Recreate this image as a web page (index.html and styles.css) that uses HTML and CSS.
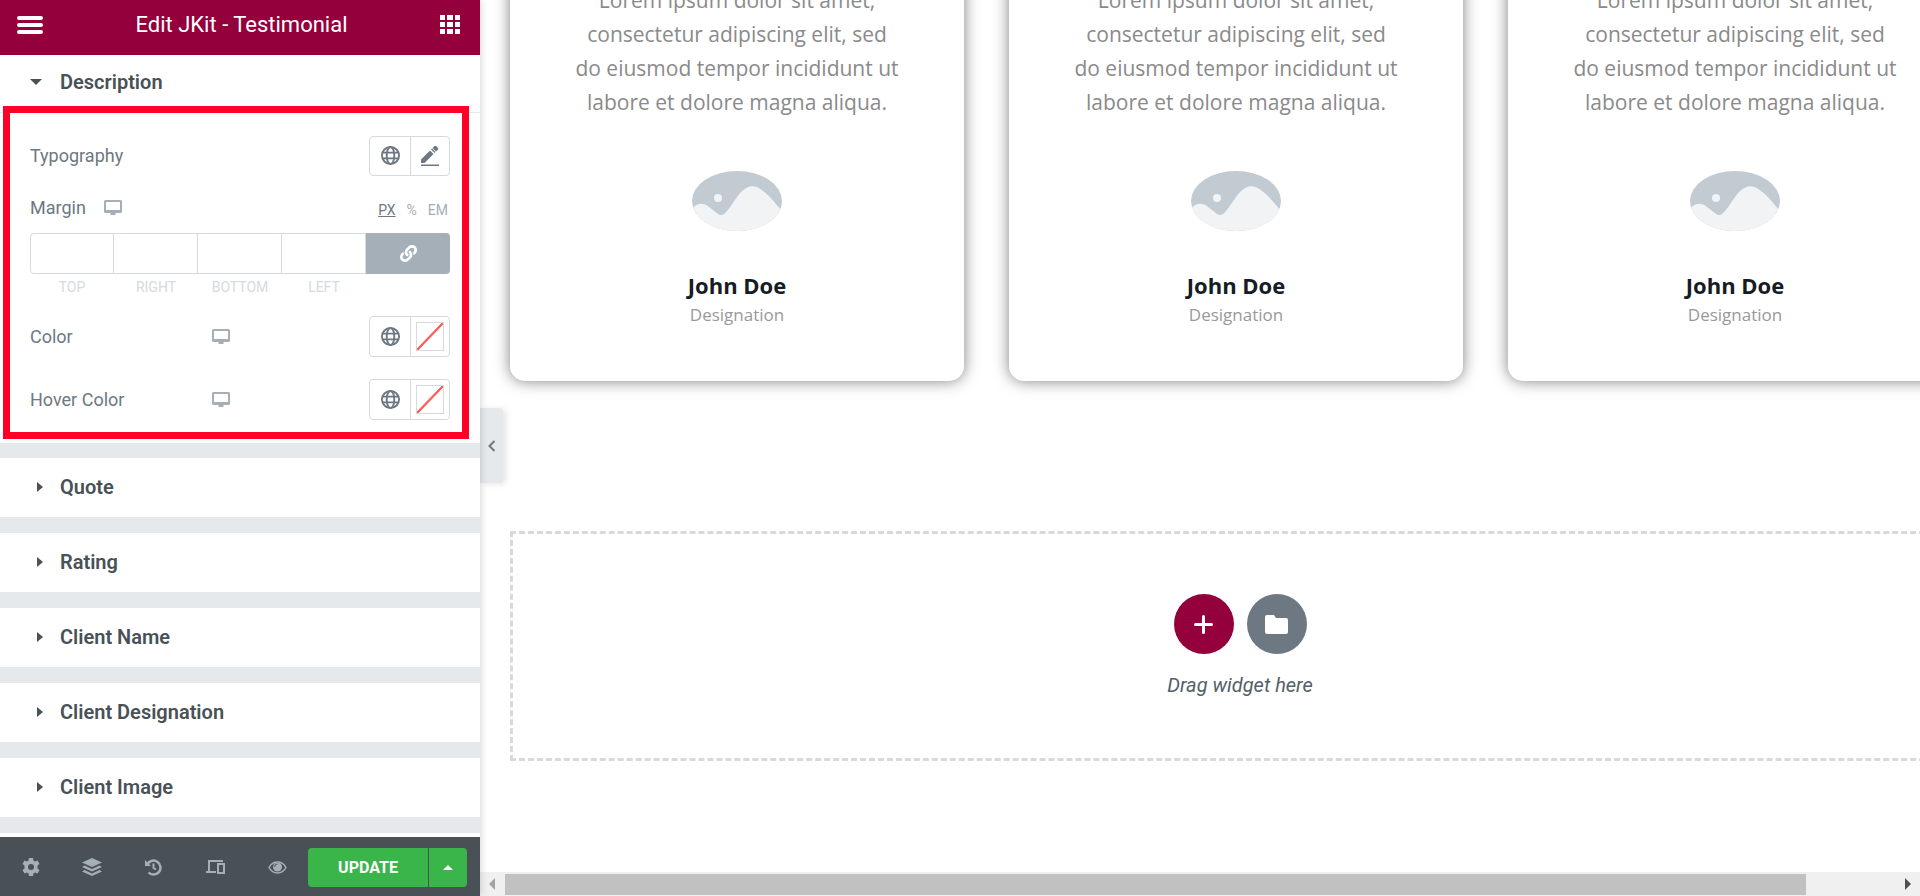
FILE: index.html
```
<!DOCTYPE html>
<html lang="en">
<head>
    <meta charset="UTF-8">
    <title>Edit JKit - Testimonial</title>
    <link rel="stylesheet" href="styles.css">
</head>
<body>
    <!-- shared icons -->
    <svg class="sprite" aria-hidden="true">
        <symbol id="i-globe" viewBox="0 0 20 20">
            <g fill="none" stroke="currentColor" stroke-width="2">
                <circle cx="10" cy="10" r="9"/>
                <ellipse cx="10" cy="10" rx="4" ry="9"/>
                <path d="M1.5 7h17M1.5 13h17"/>
            </g>
        </symbol>
        <symbol id="i-desktop" viewBox="0 0 18 15">
            <path fill="currentColor" fill-rule="evenodd" d="M1.500 0h15a1.500 1.500 0 0 1 1.500 1.500v10a1.500 1.500 0 0 1-1.500 1.500h-5v2h-5v-2h-5A1.500 1.500 0 0 1 0 11.500v-10A1.500 1.500 0 0 1 1.500 0zM2 2v8h14V2z"/>
        </symbol>
        <symbol id="i-placeholder" viewBox="0 0 90 60">
            <path fill="#c2cad2" d="M0 0h90v60H0z"/>
            <path fill="#f1f3f5" d="M0 38C5 31 12 32 17 36c6 4 9 8 12 8 6 0 12-14 20-23 8-8 15-7 22-1 7 5 13 13 19 20v20H0z"/>
            <circle cx="26" cy="27" r="4" fill="#f1f3f5"/>
        </symbol>
    </svg>

    <div class="editor">
        <aside class="panel">
            <header class="panel-header">
                <button class="icon-btn" aria-label="Menu">
                    <svg width="26" height="18" viewBox="0 0 26 18"><path stroke="currentColor" stroke-width="4" stroke-linecap="round" d="M2 2h22M2 9h22M2 16h22"/></svg>
                </button>
                <h1>Edit JKit - Testimonial</h1>
                <button class="icon-btn" aria-label="Widgets">
                    <svg width="20" height="19" viewBox="0 0 20 19"><path fill="currentColor" d="M0 0h5v5H0zM7 0h6v5H7zM15 0h5v5h-5zM0 7h5v5H0zM7 7h6v5H7zM15 7h5v5h-5zM0 14h5v5H0zM7 14h6v5H7zM15 14h5v5h-5z"/></svg>
                </button>
            </header>

            <div class="sections">
                <section class="section open">
                    <button class="section-title"><span class="caret down"></span>Description</button>
                    <div class="controls">
                        <div class="control">
                            <span class="label">Typography</span>
                            <div class="btn-group">
                                <button aria-label="Global typography"><svg width="19" height="19"><use href="#i-globe"/></svg></button>
                                <button aria-label="Edit typography">
                                    <svg width="18" height="20" viewBox="0 0 18 20"><path fill="currentColor" d="M0 13.500v3.500h3.500L12.500 8 9 4.500zM10 3.500L13.500 7l1-1L11 2.500zM11.500 2l3.500 3.500 2-2c.5-.5.5-1 0-1.500L15 0c-.5-.5-1-.5-1.500 0zM0 18.500h18v1.500H0z"/></svg>
                                </button>
                            </div>
                        </div>
                        <div class="control margin-row">
                            <span class="label">Margin</span>
                            <svg class="device" width="18" height="15"><use href="#i-desktop"/></svg>
                            <div class="units"><a href="#" class="active">PX</a><a href="#">%</a><a href="#">EM</a></div>
                        </div>
                        <div class="dimensions">
                            <div class="dim"><input type="text" id="m-top"><label for="m-top">TOP</label></div>
                            <div class="dim"><input type="text" id="m-right"><label for="m-right">RIGHT</label></div>
                            <div class="dim"><input type="text" id="m-bottom"><label for="m-bottom">BOTTOM</label></div>
                            <div class="dim"><input type="text" id="m-left"><label for="m-left">LEFT</label></div>
                            <button class="link-values" aria-label="Link values">
                                <svg width="17" height="17" viewBox="0 0 512 512"><path fill="currentColor" d="M326.612 185.391c59.747 59.809 58.927 155.698.36 214.590-.11.120-.240.250-.360.370l-67.200 67.200c-59.270 59.270-155.699 59.262-214.960 0-59.270-59.260-59.270-155.700 0-214.960l37.106-37.106c9.840-9.840 26.786-3.300 27.294 10.606.648 17.722 3.826 35.527 9.690 52.721 1.986 5.822.567 12.262-3.783 16.612l-13.087 13.087c-28.026 28.026-28.905 73.660-1.155 101.960 28.024 28.579 74.086 28.749 102.325.510l67.200-67.190c28.191-28.191 28.073-73.757 0-101.830-3.701-3.694-7.429-6.564-10.341-8.569a16.037 16.037 0 0 1-6.947-12.606c-.396-10.567 3.348-21.456 11.698-29.806l21.054-21.055c5.521-5.521 14.182-6.199 20.584-1.731a152.482 152.482 0 0 1 20.522 17.197zM467.547 44.449c-59.261-59.262-155.690-59.270-214.960 0l-67.200 67.200c-.12.120-.250.250-.360.370-58.566 58.892-59.387 154.781.360 214.590a152.454 152.454 0 0 0 20.521 17.196c6.402 4.468 15.064 3.789 20.584-1.731l21.054-21.055c8.350-8.350 12.094-19.239 11.698-29.806a16.037 16.037 0 0 0-6.947-12.606c-2.912-2.005-6.640-4.875-10.341-8.569-28.073-28.073-28.191-73.639 0-101.830l67.200-67.190c28.239-28.239 74.300-28.069 102.325.510 27.750 28.300 26.872 73.934-1.155 101.960l-13.087 13.087c-4.350 4.350-5.769 10.790-3.783 16.612 5.864 17.194 9.042 34.999 9.690 52.721.509 13.906 17.454 20.446 27.294 10.606l37.106-37.106c59.271-59.259 59.271-155.699.001-214.959z"/></svg>
                            </button>
                        </div>
                        <div class="control color-row">
                            <span class="label half">Color</span>
                            <svg class="device" width="18" height="15"><use href="#i-desktop"/></svg>
                            <div class="btn-group">
                                <button aria-label="Global color"><svg width="19" height="19"><use href="#i-globe"/></svg></button>
                                <button aria-label="Pick color"><span class="swatch"></span></button>
                            </div>
                        </div>
                        <div class="control color-row">
                            <span class="label half">Hover Color</span>
                            <svg class="device" width="18" height="15"><use href="#i-desktop"/></svg>
                            <div class="btn-group">
                                <button aria-label="Global hover color"><svg width="19" height="19"><use href="#i-globe"/></svg></button>
                                <button aria-label="Pick hover color"><span class="swatch"></span></button>
                            </div>
                        </div>
                    </div>
                    <div class="highlight"></div>
                </section>
                <section class="section"><button class="section-title"><span class="caret"></span>Quote</button></section>
                <section class="section"><button class="section-title"><span class="caret"></span>Rating</button></section>
                <section class="section"><button class="section-title"><span class="caret"></span>Client Name</button></section>
                <section class="section"><button class="section-title"><span class="caret"></span>Client Designation</button></section>
                <section class="section"><button class="section-title"><span class="caret"></span>Client Image</button></section>
                <section class="section"></section>
            </div>

            <footer class="panel-footer">
                <div class="tools">
                    <button aria-label="Settings"><svg width="18" height="18" viewBox="0 0 18 18"><path fill="currentColor" fill-rule="evenodd" d="M7 0h4l.5 2.500 1.500 1 2.500-1 2 3.500-2 1.500v3l2 1.500-2 3.500-2.500-1-1.500 1L11 18H7l-.5-2.500-1.500-1-2.500 1-2-3.500 2-1.500v-3L.5 6l2-3.500 2.500 1 1.500-1zM9 6a3 3 0 1 0 0 6 3 3 0 0 0 0-6z"/></svg></button>
                    <button aria-label="Navigator"><svg width="20" height="18" viewBox="0 0 20 18"><path fill="currentColor" d="M10 0l10 4.500L10 9 0 4.500zM2.500 7.500L10 11l7.500-3.500L20 9l-10 4.500L0 9zM2.500 12L10 15.500l7.500-3.500 2.500 1.500L10 18 0 13.500z"/></svg></button>
                    <button aria-label="History"><svg width="17" height="17" viewBox="0 0 17 17"><g fill="none" stroke="currentColor" stroke-width="2.500"><path d="M2.500 5A7 7 0 1 1 3.500 13.500"/><path stroke-width="2" d="M8.500 4.500V9l2.500 1.500"/></g><path fill="currentColor" d="M0 1v6h6z"/></svg></button>
                    <button aria-label="Responsive mode"><svg width="20" height="16" viewBox="0 0 20 16"><path fill="none" stroke="currentColor" stroke-width="2" d="M3 12V2h14M0 13h10"/><path fill="none" stroke="currentColor" stroke-width="2" d="M12 5h6v9h-6z"/></svg></button>
                    <button aria-label="Preview changes"><svg width="19" height="13" viewBox="0 0 19 13"><path fill="none" stroke="currentColor" stroke-width="1.500" d="M1 6.500C5-.8 14-.8 18 6.500 14 13.800 5 13.800 1 6.500z"/><circle cx="9.500" cy="6" r="4.500" fill="currentColor"/><path fill="none" stroke="#495157" d="M6.500 6a3 3 0 0 1 3-3"/></svg></button>
                </div>
                <div class="publish">
                    <button class="update">UPDATE</button>
                    <button class="options" aria-label="Save options"><span class="caret up"></span></button>
                </div>
            </footer>
        </aside>

        <main class="preview">
            <button class="panel-toggle" aria-label="Hide panel">
                <svg width="8" height="12" viewBox="0 0 8 12"><path fill="none" stroke="currentColor" stroke-width="2" d="M6.500 1L1.500 6l5 5"/></svg>
            </button>
            <div class="canvas">
                <div class="testimonials">
                    <article class="card">
                        <p>Lorem ipsum dolor sit amet, consectetur adipiscing elit, sed do eiusmod tempor incididunt ut labore et dolore magna aliqua.</p>
                        <svg class="avatar" width="90" height="60"><use href="#i-placeholder"/></svg>
                        <h3>John Doe</h3>
                        <span class="designation">Designation</span>
                    </article>
                    <article class="card">
                        <p>Lorem ipsum dolor sit amet, consectetur adipiscing elit, sed do eiusmod tempor incididunt ut labore et dolore magna aliqua.</p>
                        <svg class="avatar" width="90" height="60"><use href="#i-placeholder"/></svg>
                        <h3>John Doe</h3>
                        <span class="designation">Designation</span>
                    </article>
                    <article class="card">
                        <p>Lorem ipsum dolor sit amet, consectetur adipiscing elit, sed do eiusmod tempor incididunt ut labore et dolore magna aliqua.</p>
                        <svg class="avatar" width="90" height="60"><use href="#i-placeholder"/></svg>
                        <h3>John Doe</h3>
                        <span class="designation">Designation</span>
                    </article>
                </div>
                <div class="drop-zone">
                    <div class="drop-buttons">
                        <button class="add" aria-label="Add section"><svg width="19" height="19" viewBox="0 0 19 19"><path stroke="currentColor" stroke-width="3" stroke-linecap="round" d="M9.500 1.500v16M1.500 9.500h16"/></svg></button>
                        <button class="library" aria-label="Add template"><svg width="23" height="19" viewBox="0 0 23 19"><path fill="currentColor" d="M2 0h7l2 3h10a2 2 0 0 1 2 2v12a2 2 0 0 1-2 2H2a2 2 0 0 1-2-2V2a2 2 0 0 1 2-2z"/></svg></button>
                    </div>
                    <div class="drop-text">Drag widget here</div>
                </div>
            </div>
            <div class="scrollbar">
                <span class="arrow left"></span>
                <div class="track"><div class="thumb"></div></div>
                <span class="arrow right"></span>
            </div>
        </main>
    </div>
</body>
</html>
```
FILE: styles.css
```
* {
    box-sizing: border-box;
}
body {
    margin: 0;
    font-family: Roboto, Arial, sans-serif;
    font-size: 18px;
    color: #6d7882;
    background: #fff;
}
button {
    margin: 0;
    padding: 0;
    border: none;
    background: none;
    font-family: inherit;
    color: inherit;
    cursor: pointer;
}
svg {
    display: block;
}
.sprite {
    position: absolute;
    width: 0;
    height: 0;
}
.editor {
    display: flex;
    height: 100vh;
    overflow: hidden;
}

/* left panel */
.panel {
    position: relative;
    z-index: 2;
    display: flex;
    flex-direction: column;
    flex: 0 0 480px;
    background: #e6e9ec;
    box-shadow: 0 0 8px rgba(0,0,0,0.2);
}
.panel-header {
    display: flex;
    align-items: center;
    justify-content: space-between;
    height: 55px;
    padding: 0 20px 6px 17px;
    background: #93003c;
    color: #fff;
}
.panel-header h1 {
    margin: 0;
    font-size: 22px;
    font-weight: 400;
}
.sections {
    flex: 1;
    min-height: 0;
    overflow: hidden;
}
.section {
    position: relative;
    height: 59px;
    margin-bottom: 16px;
    background: #fff;
}
.section.open {
    height: auto;
    margin-bottom: 15px;
}
.section-title {
    display: flex;
    align-items: center;
    width: 100%;
    height: 58px;
    padding: 0 30px;
    font-size: 20px;
    font-weight: 600;
    color: #495157;
}
.open .section-title {
    padding-bottom: 3px;
    border-bottom: 1px solid #e6e9ec;
}
.caret {
    width: 6px;
    margin: 0 17px 0 7px;
    border: 5px solid transparent;
    border-left: 6px solid #495157;
    border-right: none;
}
.caret.down {
    width: 12px;
    margin: 0 18px 0 0;
    border: 6px solid transparent;
    border-top-color: #495157;
    border-bottom: none;
}
.caret.up {
    width: 10px;
    margin: 0;
    border: 5px solid transparent;
    border-bottom-color: #fff;
    border-top: none;
}
.controls {
    padding: 22px 30px 23px;
}
.control {
    display: flex;
    align-items: center;
    height: 41px;
}
.label.half {
    width: 182px;
}
.device {
    color: #a4afb7;
}
.btn-group {
    display: flex;
    margin-left: auto;
    border: 1px solid #d5dadf;
    border-radius: 4px;
}
.btn-group button {
    display: flex;
    align-items: center;
    justify-content: center;
    width: 38px;
    height: 38px;
}
.btn-group button:first-child {
    width: 41px;
    border-right: 1px solid #d5dadf;
}
.color-row .btn-group button {
    height: 39px;
}
.swatch {
    width: 28px;
    height: 29px;
    border: 1px solid #d5dadf;
    background: linear-gradient(to bottom right, transparent 46%, #ff5c5c 48%, #ff5c5c 52%, transparent 54%);
}
.margin-row {
    height: 24px;
    margin: 19px 0 14px;
}
.margin-row .device {
    margin-left: 18px;
}
.units {
    display: flex;
    gap: 11px;
    margin-left: auto;
    padding: 5px 2px 0 0;
    font-size: 14px;
}
.units a {
    color: #a4afb7;
    text-decoration: none;
}
.units .active {
    color: #6d7882;
    text-decoration: underline;
}
.dimensions {
    display: grid;
    grid-template-columns: repeat(5, 1fr);
}
.dim input {
    display: block;
    width: 100%;
    height: 41px;
    border: 1px solid #d5dadf;
    border-left: none;
}
.dim:first-child input {
    border-left: 1px solid #d5dadf;
    border-radius: 4px 0 0 4px;
}
.dim label {
    display: block;
    padding-top: 6px;
    font-size: 14px;
    line-height: 14px;
    text-align: center;
    color: #d5dadf;
}
.link-values {
    display: flex;
    align-items: center;
    justify-content: center;
    height: 41px;
    border-radius: 0 4px 4px 0;
    background: #a4afb7;
    color: #fff;
}
.color-row {
    margin-top: 22px;
}
/* red marker around the description controls */
.highlight {
    position: absolute;
    top: 51px;
    right: 11px;
    bottom: 4px;
    left: 3px;
    border: 7px solid #ff0027;
    pointer-events: none;
}
.panel-footer {
    display: flex;
    align-items: center;
    height: 59px;
    padding: 1px 13px 0 0;
    background: #495157;
    color: #a4afb7;
}
.tools {
    display: flex;
    align-items: center;
    flex: 1;
}
.tools button {
    display: flex;
    flex: 1;
    justify-content: center;
}
.publish {
    display: flex;
    gap: 1px;
    height: 39px;
    color: #fff;
}
.publish button {
    background: #39b54a;
}
.publish .update {
    width: 120px;
    border-radius: 4px 0 0 4px;
    font-size: 16px;
    font-weight: 700;
}
.publish .options {
    display: flex;
    align-items: center;
    justify-content: center;
    width: 38px;
    border-radius: 0 4px 4px 0;
}

/* preview */
.preview {
    position: relative;
    display: flex;
    flex-direction: column;
    flex: 1;
    min-width: 0;
}
.panel-toggle {
    position: absolute;
    top: 408px;
    left: 0;
    z-index: 1;
    display: flex;
    align-items: center;
    justify-content: center;
    width: 23px;
    height: 75px;
    border-radius: 0 3px 3px 0;
    background: #e6e9ec;
    box-shadow: 3px 1px 6px rgba(0,0,0,0.1);
}
/* scrolled to the end, so the content hangs from the bottom */
.canvas {
    display: flex;
    flex: 1;
    flex-direction: column;
    justify-content: flex-end;
    min-height: 0;
    padding: 0 0 111px 30px;
    overflow: hidden;
}
.testimonials {
    display: flex;
    gap: 45px;
    margin-bottom: 150px;
}
.card {
    display: flex;
    flex: 0 0 454px;
    flex-direction: column;
    align-items: center;
    padding: 50px 64px 51px;
    border-radius: 15px;
    background: #fff;
    box-shadow: 0 0 15px rgba(0,0,0,0.5);
    font-family: "Open Sans", "Noto Sans", sans-serif;
    text-align: center;
}
.card p {
    margin: 0 0 52px;
    font-size: 21px;
    line-height: 34px;
    color: #8a8a8a;
}
.avatar {
    border-radius: 50%;
}
.card h3 {
    margin: 39px 0 0;
    font-size: 22px;
    font-weight: 700;
    line-height: 30px;
    color: #161c24;
}
.designation {
    font-size: 17px;
    line-height: 30px;
    color: #999;
}
.drop-zone {
    width: calc(100% + 50px);
    padding: 60px 0 59px;
    border: 3px dashed #d5dadf;
    text-align: center;
}
.drop-buttons {
    display: flex;
    justify-content: center;
    gap: 13px;
}
.drop-buttons button {
    display: flex;
    align-items: center;
    justify-content: center;
    width: 60px;
    height: 60px;
    border-radius: 50%;
    color: #fff;
}
.drop-buttons .add {
    background: #93003c;
}
.drop-buttons .library {
    background: #6d7882;
}
.drop-text {
    margin-top: 17px;
    font-size: 20px;
    font-style: italic;
    line-height: 28px;
    color: #556068;
}
.scrollbar {
    display: flex;
    align-items: center;
    height: 24px;
    background: #f0f0f0;
}
.track {
    display: flex;
    flex: 1;
}
.track::after {
    content: "";
    flex: 5;
}
.thumb {
    flex: 72;
    height: 21px;
    background: #c1c1c1;
}
.arrow {
    border: 6px solid transparent;
}
.arrow.left {
    margin: 0 10px 0 9px;
    border-left: none;
    border-right-color: #a3a3a3;
}
.arrow.right {
    margin: 0 9px;
    border-right: none;
    border-left-color: #505050;
}
```
